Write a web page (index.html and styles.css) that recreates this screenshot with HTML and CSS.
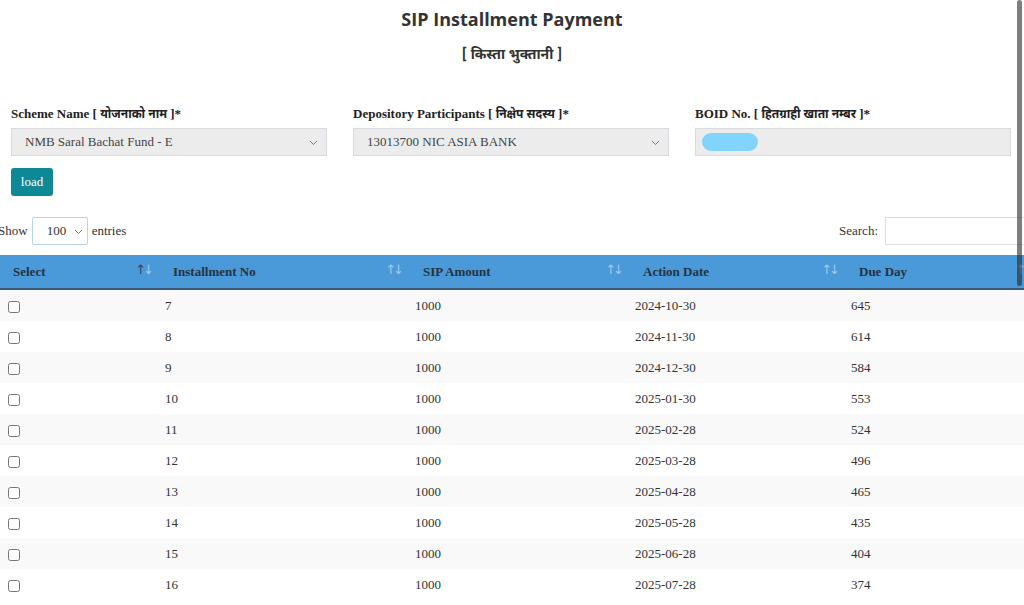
FILE: index.html
```html
<!DOCTYPE html>
<html lang="en">
<head>
  <meta charset="UTF-8" />
  <meta name="viewport" content="width=device-width, initial-scale=1.0"/>
  <title>SIP Installment Payment</title>
  <link rel="stylesheet" href="styles.css">
</head>
<body>
  <div class="page">
    <h1 class="title">SIP Installment Payment</h1>
    <h2 class="subtitle">[ किस्ता भुक्तानी ]</h2>

    <form class="sip-form">
      <div class="field-row">
        <div class="field">
          <label>Scheme Name [ <span class="dev">योजनाको नाम</span> ]*</label>
          <div class="select-box">
            <span>NMB Saral Bachat Fund - E</span>
            <svg class="chevron" width="9" height="6" viewBox="0 0 9 6"><path d="M1 1l3.5 3.5L8 1" fill="none" stroke="#777" stroke-width="1"/></svg>
          </div>
        </div>
        <div class="field">
          <label>Depository Participants [ <span class="dev">निक्षेप सदस्य</span> ]*</label>
          <div class="select-box">
            <span>13013700 NIC ASIA BANK</span>
            <svg class="chevron" width="9" height="6" viewBox="0 0 9 6"><path d="M1 1l3.5 3.5L8 1" fill="none" stroke="#777" stroke-width="1"/></svg>
          </div>
        </div>
        <div class="field">
          <label>BOID No. [ <span class="dev">हितग्राही खाता नम्बर</span> ]*</label>
          <div class="select-box">
            <span class="redacted"></span>
          </div>
        </div>
      </div>
      <button type="button" class="load-btn">load</button>
    </form>

    <div class="table-wrap">
      <div class="table-top">
        <div class="length">
          Show
          <div class="length-select">
            <span>100</span>
            <svg class="chevron" width="9" height="6" viewBox="0 0 9 6"><path d="M1 1l3.5 3.5L8 1" fill="none" stroke="#777" stroke-width="1"/></svg>
          </div>
          entries
        </div>
        <div class="search">
          Search:
          <div class="search-input"></div>
        </div>
      </div>

      <table class="sip-table">
        <colgroup>
          <col style="width:160px">
          <col style="width:250px">
          <col style="width:220px">
          <col style="width:216px">
          <col style="width:194px">
        </colgroup>
        <thead>
          <tr>
            <th>Select <span class="sort"><b>↑</b>↓</span></th>
            <th>Installment No <span class="sort">↑↓</span></th>
            <th>SIP Amount <span class="sort">↑↓</span></th>
            <th>Action Date <span class="sort">↑↓</span></th>
            <th>Due Day <span class="sort">↑↓</span></th>
          </tr>
        </thead>
        <tbody id="rows"></tbody>
      </table>
    </div>
  </div>

  <div class="scroll-thumb"></div>

  <script>
    // installment rows
    const rows = [
      [7, "2024-10-30", 645],
      [8, "2024-11-30", 614],
      [9, "2024-12-30", 584],
      [10, "2025-01-30", 553],
      [11, "2025-02-28", 524],
      [12, "2025-03-28", 496],
      [13, "2025-04-28", 465],
      [14, "2025-05-28", 435],
      [15, "2025-06-28", 404],
      [16, "2025-07-28", 374]
    ];
    const tbody = document.getElementById("rows");
    rows.forEach(r => {
      const tr = document.createElement("tr");
      tr.innerHTML =
        '<td><input type="checkbox"></td>' +
        '<td>' + r[0] + '</td>' +
        '<td>1000</td>' +
        '<td>' + r[1] + '</td>' +
        '<td>' + r[2] + '</td>';
      tbody.appendChild(tr);
    });
  </script>
</body>
</html>
```

FILE: styles.css
```css
html, body {
  margin: 0;
  overflow: hidden;
}

body {
  font-family: "Liberation Serif", "Noto Sans Devanagari", "Noto Sans", serif;
  font-size: 13px;
  color: #333;
  background: #fff;
}

.page {
  padding-top: 8px;
}

.title {
  margin: 0;
  text-align: center;
  font-family: "Open Sans", "Noto Sans", sans-serif;
  font-size: 18px;
  line-height: 22px;
  font-weight: 700;
  color: #333;
}

.subtitle {
  margin: 16px 0 0;
  text-align: center;
  font-family: "Noto Sans Devanagari", "Noto Sans", sans-serif;
  font-size: 14px;
  line-height: 20px;
  font-weight: 700;
  color: #333;
}

.sip-form {
  padding: 0 13px 0 11px;
  margin-top: 40px;
}

.field-row {
  display: grid;
  grid-template-columns: repeat(3, 316px);
  column-gap: 26px;
}

.field label {
  display: block;
  font-weight: bold;
  line-height: 16px;
  margin-bottom: 5px;
  color: #222;
}

.dev {
  font-family: "Noto Sans Devanagari", "Noto Sans", sans-serif;
  font-size: 12px;
}

.select-box {
  position: relative;
  display: flex;
  align-items: center;
  height: 28px;
  box-sizing: border-box;
  padding-left: 13px;
  background: #ececec;
  border: 1px solid #d9d9e0;
  color: #444;
}

.chevron {
  position: absolute;
  right: 8px;
  top: 11px;
}

.redacted {
  display: block;
  width: 56px;
  height: 18px;
  margin-left: -7px;
  border-radius: 9px;
  background: #80d4fd;
}

.load-btn {
  display: block;
  margin-top: 12px;
  width: 42px;
  height: 28px;
  padding: 0;
  border: none;
  border-radius: 3px;
  background: #0f8896;
  color: #fff;
  font-family: "Liberation Serif", serif;
  font-size: 13px;
}

.table-wrap {
  width: 1040px;
  margin-top: 21px;
}

.table-top {
  display: flex;
  justify-content: space-between;
  align-items: center;
  height: 28px;
  margin-bottom: 10px;
}

.length {
  display: flex;
  align-items: center;
  gap: 4px;
  margin-left: -2px;
}

.length-select {
  position: relative;
  width: 56px;
  height: 28px;
  box-sizing: border-box;
  border: 1px solid #b9d3ea;
  border-radius: 2px;
  padding-left: 14px;
  line-height: 26px;
}

.length-select .chevron {
  right: 4px;
}

.search {
  display: flex;
  align-items: center;
  gap: 7px;
}

.search-input {
  width: 155px;
  height: 28px;
  box-sizing: border-box;
  border: 1px solid #ddd;
}

.sip-table {
  width: 1040px;
  table-layout: fixed;
  border-collapse: collapse;
}

.sip-table th {
  position: relative;
  height: 33px;
  padding: 0 0 0 13px;
  text-align: left;
  background: #4a99d8;
  border-bottom: 2px solid #3b5878;
  color: #27323e;
  font-weight: bold;
}

.sort {
  position: absolute;
  right: 9px;
  top: 7px;
  font-family: "DejaVu Sans", sans-serif;
  font-weight: normal;
  font-size: 13px;
  color: #a4c8e8;
  letter-spacing: -3px;
}

.sort b {
  font-weight: normal;
  color: #34475c;
}

.sip-table td {
  height: 31px;
  padding: 0 0 0 5px;
  color: #333;
}

.sip-table tbody tr:nth-child(odd) {
  background: #f9f9f9;
}

.sip-table input[type="checkbox"] {
  margin: 0 0 0 3px;
  width: 12px;
  height: 12px;
  vertical-align: middle;
}

.scroll-thumb {
  position: absolute;
  top: 0;
  right: 2px;
  width: 5px;
  height: 286px;
  border-radius: 3px;
  background: rgba(40, 40, 40, 0.6);
}
```
